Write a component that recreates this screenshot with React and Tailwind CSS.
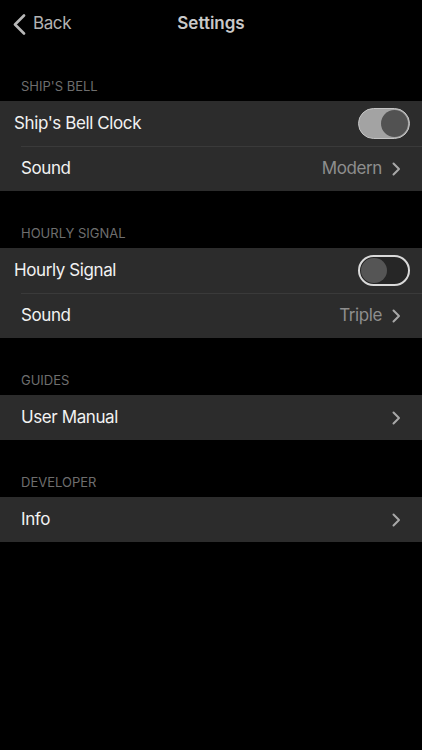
import React, { useState } from "react";

const font = { fontFamily: "Inter, 'Liberation Sans', sans-serif" };

const Chevron = () => (
  <svg width="9" height="14" viewBox="0 0 9 14" fill="none">
    <path d="M1.5 1.5L7 7l-5.5 5.5" stroke="#a8a8a8" strokeWidth="2" strokeLinecap="round" strokeLinejoin="round" />
  </svg>
);

const Toggle = ({ on, onClick }) => (
  <button
    onClick={onClick}
    className={
      on
        ? "relative w-[52px] h-[31px] rounded-full bg-[#a3a3a3] border border-[#c4c4c4] shrink-0"
        : "relative w-[52px] h-[31px] rounded-full bg-[#262626] border-2 border-[#d9d9d9] shrink-0"
    }
  >
    <span
      className={
        on
          ? "absolute top-[1px] right-[1px] w-[27px] h-[27px] rounded-full bg-[#525252]"
          : "absolute top-[1px] left-[1px] w-[26px] h-[25px] rounded-full bg-[#555555]"
      }
    />
  </button>
);

const Header = ({ children }) => (
  <div className="h-[57px] flex items-end pb-[7px] pl-[21px] text-[13px] leading-[16px] text-[#6e6e6e]">
    {children}
  </div>
);

const Row = ({ label, value, border }) => (
  <div className="flex items-center h-[45px] pl-[21px]">
    <div className={`flex-1 flex items-center h-full pr-[21px] ${border ? "border-t border-[#3a3a3a]" : ""}`}>
      <span className="flex-1 text-[17px] tracking-[-0.4px] text-[#f2f2f2]">{label}</span>
      {value && <span className="text-[17px] tracking-[-0.4px] text-[#8e8e8e] mr-[10px]">{value}</span>}
      <Chevron />
    </div>
  </div>
);

const ToggleRow = ({ label, on, onClick }) => (
  <div className="flex items-center h-[45px] pl-[14px] pr-[12px]">
    <span className="flex-1 text-[17px] tracking-[-0.4px] text-[#f2f2f2]">{label}</span>
    <Toggle on={on} onClick={onClick} />
  </div>
);

export default function App() {
  const [bell, setBell] = useState(true);
  const [hourly, setHourly] = useState(false);

  return (
    <div className="w-[422px] h-[750px] bg-black overflow-hidden" style={font}>
      <div className="relative h-[44px] pt-[4px] flex items-center justify-center">
        <div className="absolute left-[13px] top-[4px] bottom-0 flex items-center gap-[7px]">
          <svg width="13" height="21" viewBox="0 0 13 21" fill="none">
            <path d="M11 1.5L2 10.5l9 9" stroke="#b8b8b8" strokeWidth="2.6" strokeLinecap="round" strokeLinejoin="round" />
          </svg>
          <span className="text-[17px] tracking-[-0.4px] text-[#b3b3b3]">Back</span>
        </div>
        <span className="text-[17px] font-semibold text-[#c9c9c9]">Settings</span>
      </div>

      <Header>SHIP'S BELL</Header>
      <div className="bg-[#2c2c2c]">
        <ToggleRow label="Ship's Bell Clock" on={bell} onClick={() => setBell(!bell)} />
        <Row label="Sound" value="Modern" border />
      </div>

      <Header>HOURLY SIGNAL</Header>
      <div className="bg-[#2c2c2c]">
        <ToggleRow label="Hourly Signal" on={hourly} onClick={() => setHourly(!hourly)} />
        <Row label="Sound" value="Triple" border />
      </div>

      <Header>GUIDES</Header>
      <div className="bg-[#2c2c2c]">
        <Row label="User Manual" />
      </div>

      <Header>DEVELOPER</Header>
      <div className="bg-[#2c2c2c]">
        <Row label="Info" />
      </div>
    </div>
  );
}
